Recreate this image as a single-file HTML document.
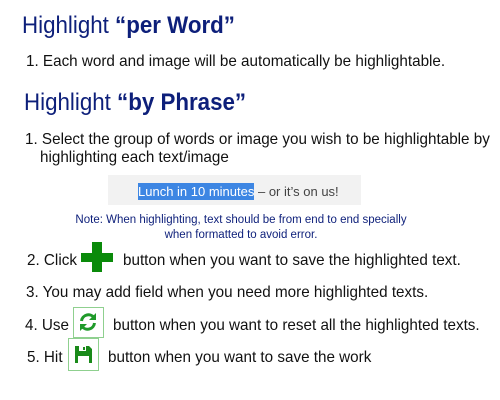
<!DOCTYPE html>
<html><head><meta charset="utf-8"><style>
body{margin:0;width:500px;height:400px;background:#fff;position:relative;overflow:hidden;font-family:"Liberation Sans",sans-serif}
.l{position:absolute;white-space:nowrap;line-height:1;transform-origin:0 0}
.t{font-size:24px;color:#0d1f7a;transform:scaleX(0.93)}
.t b{font-weight:bold}
.b{font-size:16px;color:#111;transform:scaleX(0.952)}
.n{font-size:11.5px;color:#0d1f7a}
.box{position:absolute;border:1.5px solid #8fd08f;box-sizing:border-box;background:#fff}
</style></head><body>
<div class="l t" style="left:22px;top:13.5px">Highlight <b>“per Word”</b></div>
<div class="l b" style="left:26px;top:53.5px">1. Each word and image will be automatically be highlightable.</div>
<div class="l t" style="left:24px;top:90.5px">Highlight <b>“by Phrase”</b></div>
<div class="l b" style="left:25px;top:131.5px">1. Select the group of words or image you wish to be highlightable by</div>
<div class="l b" style="left:40px;top:149.5px">highlighting each text/image</div>
<div style="position:absolute;left:108px;top:175px;width:253px;height:30px;background:#f2f2f2"></div>
<div class="l" style="left:138px;top:185px;font-size:13px;color:#444"><span style="background:#3d86e3;color:#fff;padding:1px 0">Lunch in 10 minutes</span> – or it’s on us!</div>
<div class="l n" style="left:0;width:482px;text-align:center;top:215px">Note: When highlighting, text should be from end to end specially</div>
<div class="l n" style="left:0;width:482px;text-align:center;top:230px">when formatted to avoid error.</div>
<div class="l b" style="left:27px;top:252.5px">2. Click</div>
<div style="position:absolute;left:92px;top:242px;width:10px;height:30px;background:#0a8a0a"></div>
<div style="position:absolute;left:81px;top:253px;width:32px;height:9px;background:#0a8a0a"></div>
<div class="l b" style="left:123px;top:252.5px">button when you want to save the highlighted text.</div>
<div class="l b" style="left:26px;top:284.5px">3. You may add field when you need more highlighted texts.</div>
<div class="l b" style="left:25px;top:317.5px">4. Use</div>
<div class="box" style="left:73px;top:307px;width:31px;height:31px">
<svg width="28" height="28" viewBox="0 0 28 28" style="position:absolute;left:0;top:0"><g fill="none" stroke="#1f9a2a" stroke-width="3"><path d="M7.5 13a7 7 0 0 1 12.5-3.5"/><path d="M20.5 15a7 7 0 0 1-12.5 3.5"/></g><path d="M22 5v7h-7z" fill="#1f9a2a"/><path d="M6 23v-7h7z" fill="#1f9a2a"/></svg></div>
<div class="l b" style="left:113px;top:317.5px">button when you want to reset all the highlighted texts.</div>
<div class="l b" style="left:27px;top:349.5px">5. Hit</div>
<div class="box" style="left:68px;top:338px;width:31px;height:33px">
<svg width="28" height="30" viewBox="0 0 28 30" style="position:absolute;left:0;top:0"><path d="M6 7h14l3 3v14H6z" fill="#1a8a1a"/><rect x="10" y="7" width="7" height="5" fill="#fff"/><rect x="14" y="8" width="2" height="3" fill="#1a8a1a"/><rect x="9" y="17" width="11" height="7" fill="#fff"/></svg></div>
<div class="l b" style="left:108px;top:349.5px">button when you want to save the work</div>
</body></html>
